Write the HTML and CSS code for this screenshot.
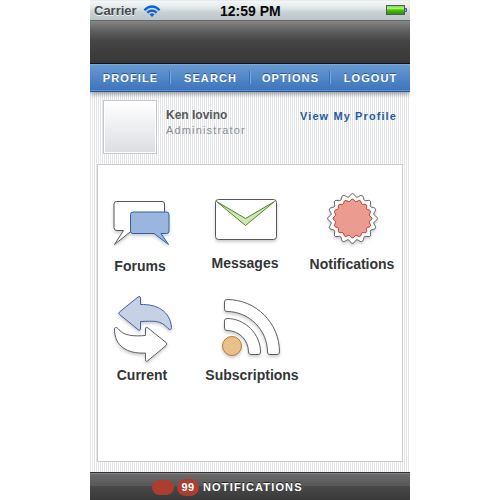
FILE: index.html
```html
<!DOCTYPE html>
<html lang="en">
<head>
<meta charset="utf-8">
<title>Profile</title>
<link rel="stylesheet" href="styles.css">
</head>
<body>
<div class="phone">
  <header class="status">
    <span class="carrier">Carrier</span>
    <svg class="wifi" width="18" height="13" viewBox="143 4 18 13" fill="none" stroke="#0c62d8" stroke-width="2.3">
      <path d="M144.4 9.2Q152 1.8 159.600 9.200M147.300 11.700Q152 7.200 156.700 11.700"/>
      <path d="M149.500 13.300Q152 11.300 154.500 13.300L152 16Z" fill="#0c62d8" stroke="none"/>
    </svg>
    <span class="time">12:59 PM</span>
    <svg class="battery" width="22" height="11" viewBox="386 5 22 11">
      <defs><linearGradient id="charge" x2="0" y2="1"><stop stop-color="#7bdc3c"/><stop offset=".3" stop-color="#b3f57a"/><stop offset=".5" stop-color="#4fc00e"/><stop offset="1" stop-color="#2b9500"/></linearGradient></defs>
      <rect x="386.500" y="5.500" width="18" height="9" fill="#eaf5e8" stroke="#50586a"/>
      <rect x="387" y="6" width="17" height="8" fill="url(#charge)"/>
      <path d="M405 8.500h1.500v3h-1.500" fill="#aab" stroke="#50586a"/>
    </svg>
  </header>
  <div class="titlebar"></div>
  <nav class="nav">
    <a class="tab">PROFILE</a><a class="tab">SEARCH</a><a class="tab">OPTIONS</a><a class="tab">LOGOUT</a>
  </nav>
  <main class="content">
    <section class="user">
      <div class="avatar"></div>
      <div class="identity"><div class="name">Ken Iovino</div><div class="role">Administrator</div></div>
      <a class="view">View My Profile</a>
    </section>
    <section class="card">
      <a class="item">
        <svg class="icon" width="70" height="64" viewBox="105 190 70 64">
          <path d="M116.500 201.500H162Q164.500 201.500 164.500 204V228Q164.500 230.500 162 230.500H132L114.500 244.500L123.500 230.500H117Q114 230.500 114 227.500V204Q114 201.500 116.500 201.500Z" fill="#fff" stroke="#55565a"/>
          <path d="M133 212H166.500Q169 212 169 214.500V231Q169 233.500 166.500 233.500H161L168.500 244.500L154 233.500H133Q130.500 233.500 130.500 231V214.500Q130.500 212 133 212Z" fill="#9ab5de" stroke="#2c62a4"/>
        </svg>
        <span class="label">Forums</span>
      </a>
      <a class="item messages">
        <svg class="icon" width="70" height="64" viewBox="210 190 70 64">
          <rect x="215.500" y="199.500" width="61" height="40" rx="3" fill="#fff" stroke="#55555c"/>
          <path d="M216.500 201.500L245.500 218.500L274.500 201.500L245.500 225.500Z" fill="#cfe5b8" stroke="#4c8b1b"/>
        </svg>
        <span class="label">Messages</span>
      </a>
      <a class="item notices">
        <svg class="icon" width="70" height="64" viewBox="317 190 70 64">
          <path id="outer" fill="#fff" stroke="#55565a"/>
          <path id="inner" fill="#eb9b90" stroke="#bd2822"/>
        </svg>
        <span class="label">Notifications</span>
      </a>
      <a class="item current">
        <svg class="icon" width="70" height="73" viewBox="107 290 70 73">
          <path d="M119.500 312L138 297Q140.500 295.500 140.500 298V304.500C157 304 170 311 171.500 327.500Q171 331 168 328.500C161 320 154 321 140.500 321.500V328Q140.500 331.500 138 329.500L119.500 314.500Q118 313.200 119.500 312Z" fill="#c7d1e6" stroke="#4060a5"/>
          <path d="M114.500 329Q115 326 118 328.500C123 336 134 336.500 145.500 335.500V329Q145.500 326 148 328L166 342.500Q168 344 166 345.500L148 360.500Q145.500 362.500 145.500 359.500V353C127 354 114.500 346 114.500 329Z" fill="#fff" stroke="#606165"/>
        </svg>
        <span class="label">Current</span>
      </a>
      <a class="item subs">
        <svg class="icon" width="70" height="73" viewBox="217 290 70 73">
          <path d="M227 299.500C256 299.500 279.500 323 279.500 352Q279.500 354.500 277 354.500H270Q267.500 354.500 267.500 352C267.500 330 249 311.500 227 311.500Q224.500 311.500 224.500 309V302Q224.500 299.500 227 299.500Z" fill="#fff" stroke="#606165"/>
          <path d="M227 318.500C245 318.500 260.500 334 260.500 352Q260.500 354.500 258 354.500H251Q248.500 354.500 248.500 352C248.500 340 239 330.500 227 330.500Q224.500 330.500 224.500 328V321Q224.500 318.500 227 318.500Z" fill="#fff" stroke="#606165"/>
          <circle cx="232" cy="346" r="9.500" fill="#e9c08a" stroke="#b57d2b"/>
        </svg>
        <span class="label">Subscriptions</span>
      </a>
    </section>
  </main>
  <footer class="footer"><span class="pill empty"></span><span class="pill">99</span><span class="caption">NOTIFICATIONS</span></footer>
</div>
<script src="badge.js"></script>
</body>
</html>
```
FILE: badge.js
```js
// Scalloped seal: rounded lobes around a common centre.
function seal(id, radius, depth, lobes) {
  const points = [];
  for (let i = 0; i < 240; i++) {
    const a = i * Math.PI / 120;
    const r = radius + depth * Math.cos(lobes * a);
    points.push((352.5 + r * Math.cos(a)).toFixed(2) + " " + (218.5 + r * Math.sin(a)).toFixed(2));
  }
  document.getElementById(id).setAttribute("d", "M" + points.join("L") + "Z");
}
seal("outer", 23.3, 1.6, 16);
seal("inner", 18.3, 1.1, 16);
```
FILE: styles.css
```css
* { box-sizing: border-box; }
body { margin: 0; background: #fff; font-family: "Liberation Sans", Arial, sans-serif; }
.phone { width: 320px; height: 500px; margin: 0 auto; display: flex; flex-direction: column; overflow: hidden; }
.status { height: 20px; display: flex; align-items: center; padding: 1px 2px 0 4px; background: linear-gradient(#f4f7f8, #e2e8ea 35%, #c9d1d4 60%, #bcc4c7); border-top: 1px solid #e9ecef; }
.carrier { width: 49px; font: bold 13px/18px "Liberation Sans", Arial, sans-serif; color: #494c4e; text-shadow: 0 1px #eef2f3; }
.time { margin: -1px 0 0 59px; width: 166px; font: bold 14px/18px "Liberation Sans", Arial, sans-serif; color: #080808; }
.wifi { margin-top: 1px; }
.battery { flex: none; margin-bottom: 2px; }
.titlebar { height: 44px; border-top: 1px solid #606768; border-bottom: 1px solid #161616; background: linear-gradient(#858585, #626262 22%, #444 48%, #383838); }
.nav { height: 28px; display: flex; background: linear-gradient(#6799d2, #4d83c5 60%, #3d73bc); border-top: 1px solid #79a7dc; border-bottom: 1px solid #275894; box-shadow: inset 0 -1px #5d90cd, 0 2px 5px #0006; position: relative; }
.tab { width: 80px; margin: 6px 0 7px; border-left: 1px solid #78a7db; box-shadow: -1px 0 #396eb0; color: #fff; font-size: 11px; line-height: 15px; font-weight: bold; letter-spacing: 1.1px; text-align: center; text-shadow: 0 -1px #2b5791; white-space: nowrap; }
.tab:first-child { border: 0; box-shadow: none; padding-left: 1px; }
.content { height: 380px; padding: 8px 7px 0; background: repeating-linear-gradient(90deg, #e3e5e9 0 1px, #fff 1px 2px); }
.user { height: 64px; display: flex; padding-left: 6px; }
.avatar { width: 54px; height: 54px; border: 1px solid #c5c8ce; padding: 1px; background: linear-gradient(#fff, #dcdee2) content-box, #fff; }
.identity { width: 143px; padding: 7px 0 0 9px; }
.name { font-size: 12px; line-height: 16px; font-weight: bold; color: #58595b; }
.role { font-size: 11px; line-height: 15px; letter-spacing: 1.15px; color: #8b8d91; }
.view { padding-top: 9px; font-size: 11px; line-height: 15px; font-weight: bold; letter-spacing: 1.1px; color: #2859a5; white-space: nowrap; }
.card { width: 306px; height: 298px; border: 1px solid #c8cbd0; background: #fff; padding-top: 25px; display: grid; grid-template-columns: 84px 126px 88px; grid-template-rows: 100px 100px; }
.item { display: flex; flex-direction: column; align-items: center; }
.icon { flex: none; filter: drop-shadow(0 2px 1.5px #0003); }
.label { margin-top: 3px; font-size: 14px; line-height: 18px; font-weight: bold; color: #343538; white-space: nowrap; }
.messages .label { margin-top: 0; }
.notices .label { margin-top: 1px; }
.current { padding-left: 4px; }
.subs { padding-left: 14px; }
.footer { height: 28px; flex: none; display: flex; align-items: center; padding: 1px 0 0 62px; border-top: 1px solid #303030; background: linear-gradient(#858585 0 1px, #6b6b6b 1px, #565656 50%, #484848 50%, #393939); color: #fff; }
.pill { width: 22px; height: 17px; margin-right: 3px; border-radius: 9px; background: #ac3d31; text-align: center; font-size: 11px; line-height: 16px; font-weight: bold; letter-spacing: .4px; }
.empty { height: 15px; }
.caption { margin-left: 1px; font-size: 11px; font-weight: bold; letter-spacing: 1.15px; text-shadow: 0 -1px #222; }
```
